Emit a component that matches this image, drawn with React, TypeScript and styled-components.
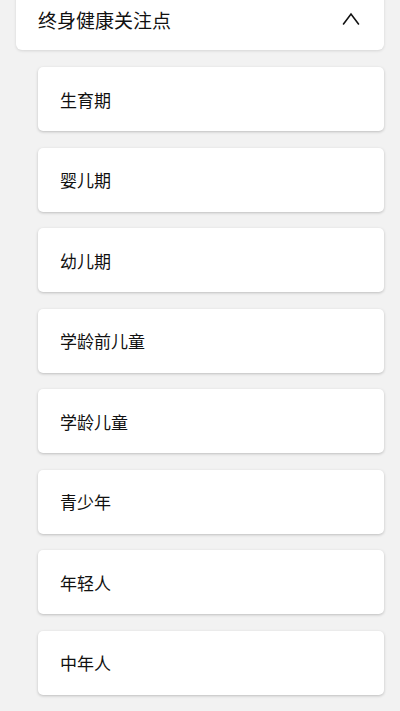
import React from "react";
import styled, { createGlobalStyle } from "styled-components";

const stages = [
  "生育期",
  "婴儿期",
  "幼儿期",
  "学龄前儿童",
  "学龄儿童",
  "青少年",
  "年轻人",
  "中年人",
];

const GlobalStyle = createGlobalStyle`
  html, body {
    margin: 0;
    padding: 0;
    background: #f2f2f2;
    font-family: "Noto Sans CJK SC", "Noto Sans", sans-serif;
    color: #111;
    overflow: hidden;
  }
`;

const Page = styled.div`
  display: flex;
  flex-direction: column;
  height: 711px;
  overflow: hidden;
`;

const Header = styled.button`
  display: flex;
  align-items: center;
  justify-content: space-between;
  margin: -12px 16px 0 16px;
  height: 62px;
  padding: 0 24px 0 22px;
  border: 0;
  border-radius: 6px;
  background: #fff;
  box-shadow: 0 1px 3px rgba(0, 0, 0, 0.12);
  font: inherit;
  color: inherit;
  text-align: left;
  flex-shrink: 0;
`;

const Title = styled.span`
  font-size: 19px;
  line-height: 1;
`;

const List = styled.ul`
  list-style: none;
  margin: 17px 16px 0 38px;
  padding: 0 0 16px 0;
  display: flex;
  flex-direction: column;
  gap: 16.5px;
  border-bottom: 1px solid #e6e6e6;
`;

const Item = styled.li`
  display: flex;
  align-items: center;
  height: 64px;
  padding: 0 22px;
  border-radius: 5px;
  background: #fff;
  box-shadow: 0 1px 3px rgba(0, 0, 0, 0.22);
  font-size: 17px;
  flex-shrink: 0;
`;

const Chevron: React.FC = () => (
  <svg width="18" height="14" viewBox="0 0 18 14" fill="none">
    <polyline
      points="1.5,12 9,2 16.5,12"
      stroke="#111"
      strokeWidth="1.6"
      strokeLinecap="round"
      strokeLinejoin="miter"
    />
  </svg>
);

const App: React.FC = () => {
  return (
    <Page>
      <GlobalStyle />
      <Header type="button">
        <Title>终身健康关注点</Title>
        <Chevron />
      </Header>
      <List>
        {stages.map((s) => (
          <Item key={s}>{s}</Item>
        ))}
      </List>
    </Page>
  );
};

export default App;
